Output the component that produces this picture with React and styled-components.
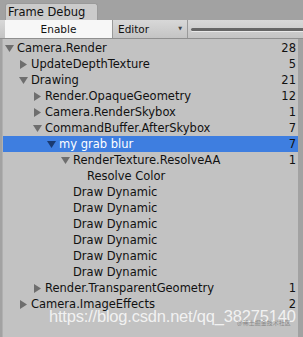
import React from 'react'
import styled, { createGlobalStyle } from 'styled-components'

const GlobalStyle = createGlobalStyle`
    html, body {
        margin: 0;
        padding: 0;
        background: #a2a2a2;
    }
    body {
        font-family: "DejaVu Sans", Verdana, sans-serif;
    }
`

const Window = styled.div`
    width: 303px;
    height: 337px;
    background: #a2a2a2;
    position: relative;
    overflow: hidden;
`

const TabStrip = styled.div`
    height: 20px;
    display: flex;
    align-items: flex-end;
    padding-left: 5px;
`

const Tab = styled.div`
    width: 93px;
    height: 17px;
    background: #cbcbcb;
    border: 1px solid #9a9a9a;
    border-bottom: none;
    border-radius: 3px 3px 0 0;
    font-size: 11.5px;
    line-height: 16px;
    padding-left: 2px;
    color: #111;
    box-sizing: border-box;
`

const Toolbar = styled.div`
    height: 18px;
    display: flex;
    align-items: stretch;
    background: linear-gradient(#d8d8d8, #c4c4c4);
    border-bottom: 1px solid #8f8f8f;
    padding-left: 5px;
`

const ToolButton = styled.div`
    width: ${p => p.$w}px;
    display: flex;
    align-items: center;
    justify-content: ${p => (p.$center ? 'center' : 'flex-start')};
    padding-left: ${p => (p.$center ? 0 : 5)}px;
    box-sizing: border-box;
    font-size: 10.5px;
    color: #111;
    background: ${p => (p.$on ? '#f7f7f7' : 'transparent')};
    border-right: 1px solid #9a9a9a;
    position: relative;
`

const DropArrow = styled.span`
    position: absolute;
    right: 5px;
    top: 5px;
    font-size: 5px;
    color: #444;
`

const SliderWrap = styled.div`
    flex: 1;
    display: flex;
    align-items: center;
    padding-left: 3px;
`

const SliderTrack = styled.div`
    flex: 1;
    height: 3px;
    background: #666;
    border-radius: 2px 0 0 2px;
    box-shadow: 0 1px 0 #e8e8e8;
`

const Tree = styled.div`
    background: #c2c2c2;
    margin: 0 5px 0 2px;
    padding-top: 1px;
    height: 298px;
    border-left: 1px solid #b0b0b0;
`

const Row = styled.div`
    height: 16px;
    display: flex;
    align-items: center;
    font-size: 11.5px;
    color: ${p => (p.$sel ? '#fff' : '#111')};
    background: ${p => (p.$sel ? '#3e7ee0' : 'transparent')};
    padding-right: 2px;
`

const Arrow = styled.span`
    width: 9px;
    margin-left: ${p => p.$indent}px;
    display: flex;
    align-items: center;
    justify-content: flex-start;
    margin-right: 3px;
`

const Label = styled.span`
    flex: 1;
    white-space: nowrap;
`

const Count = styled.span`
    color: #111;
`

const Watermark = styled.div`
    position: absolute;
    left: 49px;
    top: 307px;
    font-family: "Liberation Sans", Arial, sans-serif;
    font-size: 16.5px;
    color: rgba(255, 255, 255, 0.8);
    letter-spacing: -0.2px;
`

const SmallMark = styled.div`
    position: absolute;
    left: 237px;
    top: 318px;
    font-family: "Noto Sans CJK SC", sans-serif;
    font-size: 6px;
    color: rgba(90, 90, 90, 0.6);
`

function Tri({ open, sel }) {
    const fill = sel ? '#1a3a70' : '#6e6e6e'
    return open ? (
        <svg width="9" height="8" viewBox="0 0 9 8">
            <polygon points="0,1 9,1 4.5,8" fill={fill} />
        </svg>
    ) : (
        <svg width="8" height="9" viewBox="0 0 8 9">
            <polygon points="1,0 8,4.5 1,9" fill={fill} />
        </svg>
    )
}

const rows = [
    { d: 0, t: 'Camera.Render', n: 28, a: 'open' },
    { d: 1, t: 'UpdateDepthTexture', n: 5, a: 'closed' },
    { d: 1, t: 'Drawing', n: 21, a: 'open' },
    { d: 2, t: 'Render.OpaqueGeometry', n: 12, a: 'closed' },
    { d: 2, t: 'Camera.RenderSkybox', n: 1, a: 'closed' },
    { d: 2, t: 'CommandBuffer.AfterSkybox', n: 7, a: 'open' },
    { d: 3, t: 'my grab blur', n: 7, a: 'open', sel: true },
    { d: 4, t: 'RenderTexture.ResolveAA', n: 1, a: 'open' },
    { d: 5, t: 'Resolve Color' },
    { d: 4, t: 'Draw Dynamic' },
    { d: 4, t: 'Draw Dynamic' },
    { d: 4, t: 'Draw Dynamic' },
    { d: 4, t: 'Draw Dynamic' },
    { d: 4, t: 'Draw Dynamic' },
    { d: 4, t: 'Draw Dynamic' },
    { d: 2, t: 'Render.TransparentGeometry', n: 1, a: 'closed' },
    { d: 1, t: 'Camera.ImageEffects', n: 2, a: 'closed' },
]

export default function App() {
    return (
        <Window>
            <GlobalStyle />
            <TabStrip>
                <Tab>Frame Debug</Tab>
            </TabStrip>
            <Toolbar>
                <ToolButton $w={108} $center $on>Enable</ToolButton>
                <ToolButton $w={75}>
                    Editor
                    <DropArrow>▼</DropArrow>
                </ToolButton>
                <SliderWrap>
                    <SliderTrack />
                </SliderWrap>
            </Toolbar>
            <Tree>
                {rows.map((r, i) => (
                    <Row key={i} $sel={r.sel}>
                        <Arrow $indent={2 + r.d * 14}>
                            {r.a && <Tri open={r.a === 'open'} sel={r.sel} />}
                        </Arrow>
                        <Label>{r.t}</Label>
                        {r.n !== undefined && <Count>{r.n}</Count>}
                    </Row>
                ))}
            </Tree>
            <Watermark>https://blog.csdn.net/qq_38275140</Watermark>
            <SmallMark>@稀土掘金技术社区</SmallMark>
        </Window>
    )
}
